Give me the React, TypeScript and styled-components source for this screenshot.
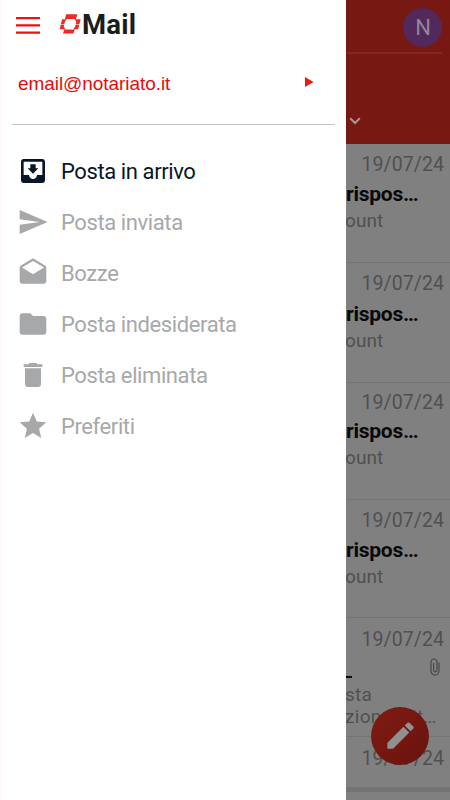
import React from "react";
import styled, { createGlobalStyle } from "styled-components";
import { MdMoveToInbox, MdSend, MdDrafts, MdFolder, MdDelete, MdStar } from "react-icons/md";
import type { IconType } from "react-icons";

const GlobalStyle = createGlobalStyle`
  * { box-sizing: border-box; }
  body { margin: 0; background: #808080; }
`;

const Screen = styled.div`
  position: relative;
  display: flex;
  width: 450px;
  height: 800px;
  overflow: hidden;
  font-family: Roboto, sans-serif;
`;

const Drawer = styled.aside`
  width: 346px;
  height: 800px;
  flex: none;
  background: #fff;
  border-left: 1px solid #fff6f6;
`;

const Brand = styled.header`
  display: flex;
  align-items: center;
  height: 50px;
  padding-left: 15px;
`;

const MenuIcon = styled.svg`
  width: 24px;
  height: 17px;
  margin-right: 19px;
`;

const Logo = styled.svg`
  width: 23px;
  height: 22px;
  margin-top: -3px;
`;

const BrandName = styled.span`
  font-size: 27.5px;
  line-height: 32px;
  font-weight: 700;
  letter-spacing: 0.2px;
  color: #1c1c1c;
`;

const Account = styled.div`
  display: flex;
  align-items: center;
  justify-content: space-between;
  height: 75px;
  margin: 0 11px;
  padding: 0 21px 7px 6px;
  border-bottom: 1px solid #c4c4c4;
  font: 19px/24px "Liberation Sans", Arial, sans-serif;
  letter-spacing: -0.06px;
  color: #e60c0c;
`;

const Arrow = styled.svg`
  width: 9px;
  height: 10px;
  margin-top: -3px;
`;

const Folders = styled.nav`
  display: flex;
  flex-direction: column;
  padding-top: 20px;
`;

const FolderRow = styled.div<{ $active?: boolean }>`
  display: flex;
  align-items: center;
  height: 51px;
  padding-left: 16px;
  gap: 12px;
  font-size: 22px;
  color: ${(p) => (p.$active ? "#071729" : "#a7a8aa")};
  svg { flex: none; }
`;

const FolderName = styled.span`
  line-height: 28px;
  padding-top: 2px;
  white-space: nowrap;
  letter-spacing: -0.4px;
`;

const Mailbox = styled.main`
  width: 104px;
  height: 800px;
  overflow: hidden;
  background: #808080;
`;

const Toolbar = styled.div`
  display: flex;
  flex-direction: column;
  height: 144px;
  background: #781812;
`;

const Profile = styled.div`
  display: flex;
  justify-content: flex-end;
  width: 95px;
  height: 54px;
  margin-left: 1px;
  padding-top: 8px;
  border-bottom: 2px solid #842823;
`;

const Avatar = styled.div`
  display: flex;
  align-items: center;
  justify-content: center;
  width: 39px;
  height: 39px;
  border-radius: 50%;
  padding-left: 1px;
  background: #51295a;
  color: #918598;
  font-size: 22px;
`;

const Chevron = styled.svg`
  width: 12px;
  height: 8px;
  margin: 63px 0 0 3px;
`;

const Message = styled.article<{ $height: number; $pad?: number }>`
  display: flex;
  flex-direction: column;
  height: ${(p) => p.$height}px;
  flex: none;
  padding-top: ${(p) => p.$pad ?? 9}px;
  border-bottom: 1px solid #747474;
  color: #505050;
  white-space: nowrap;
`;

const DateText = styled.time`
  align-self: flex-end;
  height: 24px;
  margin-right: 6px;
  font-size: 19.5px;
  line-height: 24px;
  letter-spacing: 0.08px;
`;

const Subject = styled.div<{ $top: number }>`
  height: 26px;
  margin-top: ${(p) => p.$top}px;
  font-size: 21px;
  line-height: 26px;
  font-weight: 700;
  letter-spacing: -0.25px;
  color: #080808;
`;

const Preview = styled.div<{ $top: number; $spacing?: number }>`
  height: 22px;
  margin-top: ${(p) => p.$top}px;
  margin-left: -1px;
  font-size: 19px;
  line-height: 22px;
  letter-spacing: ${(p) => p.$spacing ?? 0.1}px;
`;

const AttachmentLine = styled.div`
  display: flex;
  justify-content: space-between;
  height: 27px;
  margin-top: 5px;
  padding-right: 10px;
`;

const Dash = styled.span`
  width: 6px;
  height: 2px;
  margin-top: 19px;
  background: #080808;
`;

const Clip = styled.svg`
  width: 10px;
  height: 18px;
  margin-top: 1px;
`;

const BottomEdge = styled.div`
  height: 4px;
  background: #747474;
`;

const Compose = styled.button`
  position: absolute;
  left: 371px;
  top: 707px;
  width: 58px;
  height: 58px;
  padding: 0 0 2px;
  border: 0;
  border-radius: 50%;
  display: flex;
  align-items: center;
  justify-content: center;
  background: linear-gradient(135deg, #811b12, #68130e);
  color: #939090;
`;

const Pencil = styled.svg`
  width: 27px;
  height: 27px;
`;

interface Folder { label: string; Icon: IconType; active?: boolean }

const folders: Folder[] = [
  { label: "Posta in arrivo", Icon: MdMoveToInbox, active: true },
  { label: "Posta inviata", Icon: MdSend },
  { label: "Bozze", Icon: MdDrafts },
  { label: "Posta indesiderata", Icon: MdFolder },
  { label: "Posta eliminata", Icon: MdDelete },
  { label: "Preferiti", Icon: MdStar },
];

const messages = [
  { height: 119, pad: 9, subjectTop: 4, previewTop: 3 },
  { height: 120, pad: 9, subjectTop: 5, previewTop: 3 },
  { height: 117, pad: 8, subjectTop: 3, previewTop: 3 },
  { height: 118, pad: 9, subjectTop: 4, previewTop: 3 },
];

export default function App() {
  return (
    <Screen>
      <GlobalStyle />
      <Drawer>
        <Brand>
          <MenuIcon viewBox="0 0 24 17">
            <path d="M0 1.2h24M0 8.4h24M0 15.6h24" stroke="#ec1110" strokeWidth="2.2" />
          </MenuIcon>
          <Logo viewBox="0 0 23 22">
            <g fill="#ee2a20">
              <path d="M7.2 1.2h11.2l-1.4 4.7H5.9z" />
              <path d="M3.2 6.3h4.6L6 8.4l-.9 2.9H1.8z" />
              <path d="M15.5 6.3h6.2l-1.3 5h-3.6l.4-2.6z" />
              <path d="M1.7 11.8h3.4l-.3 2 1.5 2.4H.8z" />
              <path d="M16.7 11.8h3.6L19 16.2h-5l2-2.2z" />
              <path d="M5.2 16.4h10.5l-1.2 4.2H4z" />
            </g>
          </Logo>
          <BrandName>Mail</BrandName>
        </Brand>
        <Account>
          <span>email@notariato.it</span>
          <Arrow viewBox="0 0 9 10"><path d="M0 0v10l8.5-5z" fill="#f01813" /></Arrow>
        </Account>
        <Folders>
          {folders.map(({ label, Icon, active }) => (
            <FolderRow key={label} $active={active}>
              <Icon size={32} />
              <FolderName>{label}</FolderName>
            </FolderRow>
          ))}
        </Folders>
      </Drawer>
      <Mailbox>
        <Toolbar>
          <Profile><Avatar>N</Avatar></Profile>
          <Chevron viewBox="0 0 12 8"><path d="M1.2 1.3 6 6l4.8-4.7" fill="none" stroke="#a99794" strokeWidth="2" /></Chevron>
        </Toolbar>
        {messages.map((m, i) => (
          <Message key={i} $height={m.height} $pad={m.pad}>
            <DateText>19/07/24</DateText>
            <Subject $top={m.subjectTop}>rispos…</Subject>
            <Preview $top={m.previewTop}>ount</Preview>
          </Message>
        ))}
        <Message $height={119} $pad={10}>
          <DateText>19/07/24</DateText>
          <AttachmentLine>
            <Dash />
            <Clip viewBox="0 0 10 18">
              <path d="M9 4.5v8.6a4 4 0 0 1-8 0V4a3 3 0 0 1 6 0v8.6a1.8 1.8 0 0 1-3.4 0V5" fill="none" stroke="#484848" strokeWidth="1.2" />
            </Clip>
          </AttachmentLine>
          <Preview $top={0} $spacing={0.3}>sta</Preview>
          <Preview $top={0} $spacing={0.3}>zione d’it…</Preview>
        </Message>
        <Message $height={51} $pad={10}><DateText>19/07/24</DateText></Message>
        <BottomEdge />
      </Mailbox>
      <Compose aria-label="Scrivi">
        <Pencil viewBox="0 0 27 27" fill="currentColor">
          <path d="M.3 26.7v-5.8L16.4 4.8l5.8 5.8L6.1 26.7z" />
          <path d="M17.7 3.5 20.5.8q1-.8 2 0l3.8 3.8q.8 1 0 2l-2.8 2.7z" />
        </Pencil>
      </Compose>
    </Screen>
  );
}
